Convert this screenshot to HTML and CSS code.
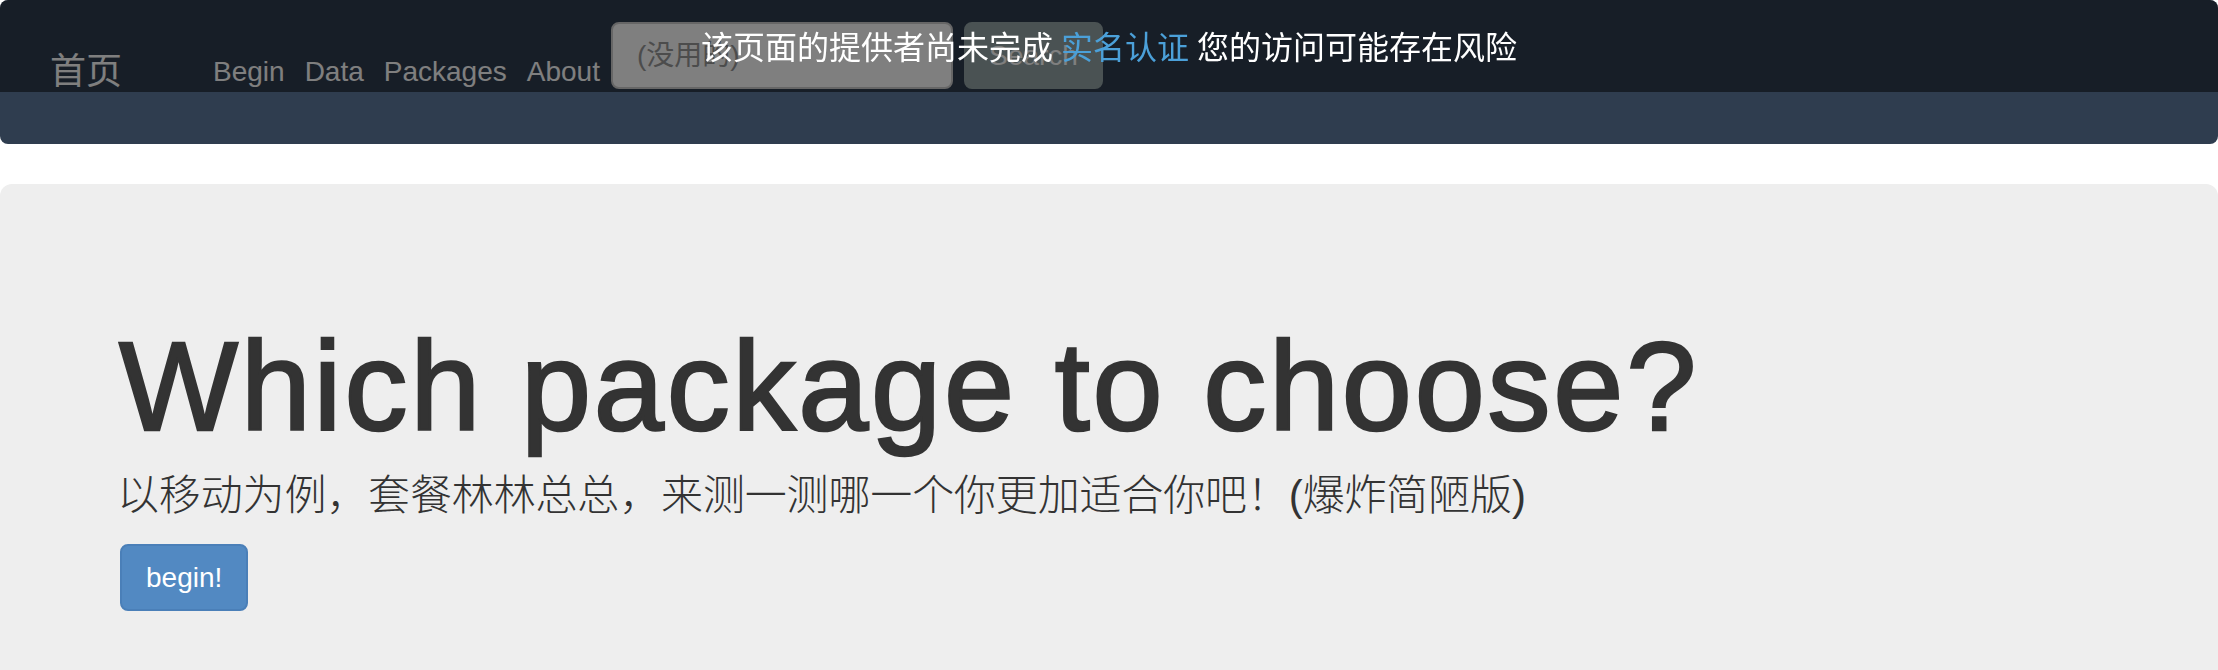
FILE: index.html
```html
<!DOCTYPE html>
<html lang="zh">
<head>
<meta charset="utf-8">
<title>Which package to choose?</title>
<link rel="stylesheet" href="styles.css">
</head>
<body>
<nav class="navbar">
  <a class="brand" href="#">首页</a>
  <ul class="nav-links">
    <li><a href="#">Begin</a></li>
    <li><a href="#">Data</a></li>
    <li><a href="#">Packages</a></li>
    <li><a href="#">About</a></li>
  </ul>
  <form class="nav-form">
    <input class="search-input" type="text" placeholder="(没用的)">
    <button class="search-btn" type="button">Search</button>
  </form>
</nav>
<div class="notice">该页面的提供者尚未完成 <a href="#" class="notice-link">实名认证</a> 您的访问可能存在风险</div>
<main class="jumbotron">
  <h1 class="title">Which package to choose?</h1>
  <p class="lead">以移动为例，套餐林林总总，来测一测哪一个你更加适合你吧！(爆炸简陋版)</p>
  <p class="actions"><a class="btn-primary" href="#">begin!</a></p>
</main>
</body>
</html>
```
FILE: styles.css
```css
html, body {
  margin: 0;
  padding: 0;
  background: #ffffff;
}
body {
  font-family: "Liberation Sans", Arial, "Noto Sans CJK SC", sans-serif;
  color: #333333;
  overflow: hidden;
}
.navbar {
  display: flex;
  align-items: flex-start;
  height: 144px;
  box-sizing: border-box;
  padding-left: 50px;
  background: #2f3d4f;
  border-radius: 8px;
  margin-bottom: 40px;
}
.brand {
  font-family: "Liberation Sans", "Noto Sans CJK SC", sans-serif;
  font-size: 36px;
  line-height: 40px;
  margin-top: 52px;
  color: #ffffff;
  text-decoration: none;
}
.nav-links {
  display: flex;
  list-style: none;
  margin: 52px 0 0 81px;
  padding: 0;
}
.nav-links a {
  display: block;
  padding: 0 10px;
  font-size: 28px;
  line-height: 40px;
  color: #ffffff;
  text-decoration: none;
}
.nav-form {
  display: flex;
  gap: 11px;
  margin: 22px 0 0 1px;
}
.search-input {
  box-sizing: border-box;
  width: 342px;
  height: 67px;
  padding: 0 24px;
  border: 2px solid #cccccc;
  border-radius: 8px;
  background: #ffffff;
  font-family: "Liberation Sans", "Noto Sans CJK SC", sans-serif;
  font-size: 28px;
  color: #555555;
  outline: none;
}
.search-input::placeholder {
  color: #999999;
}
.search-btn {
  box-sizing: border-box;
  width: 139px;
  height: 67px;
  padding: 0;
  border: 2px solid #95a5a6;
  border-radius: 8px;
  background: #95a5a6;
  font-family: "Liberation Sans", sans-serif;
  font-size: 28px;
  color: #ffffff;
}
.notice {
  position: fixed;
  top: 0;
  left: 0;
  right: 0;
  height: 92px;
  box-sizing: border-box;
  padding-top: 4px;
  line-height: 88px;
  text-align: center;
  background: rgba(0, 0, 0, 0.5);
  border-radius: 8px 8px 0 0;
  color: #ffffff;
  font-family: "Liberation Serif", "Noto Sans CJK SC", serif;
  font-size: 32px;
}
.notice-link {
  color: #4ba0d9;
  text-decoration: none;
}
.jumbotron {
  display: block;
  background: #eeeeee;
  border-radius: 12px;
  padding: 96px 120px;
}
.title {
  margin: 37px 0 10px -1px;
  font-family: "Liberation Sans", Arial, sans-serif;
  font-size: 126px;
  line-height: 139px;
  font-weight: 400;
  letter-spacing: 2.8px;
  -webkit-text-stroke: 2.5px #333333;
  color: #333333;
  white-space: nowrap;
}
.lead {
  margin: 0 0 18px -3px;
  font-family: "Liberation Sans", "Noto Sans CJK SC", sans-serif;
  font-size: 42px;
  line-height: 60px;
  font-weight: 300;
  letter-spacing: -0.15px;
  color: #333333;
  white-space: nowrap;
}
.actions {
  margin: 0;
}
.btn-primary {
  display: inline-block;
  box-sizing: border-box;
  height: 67px;
  padding: 0 24px;
  line-height: 63px;
  border: 2px solid #4a7fb8;
  border-radius: 8px;
  background: #5289c2;
  color: #ffffff;
  font-size: 28px;
  text-decoration: none;
}
```
